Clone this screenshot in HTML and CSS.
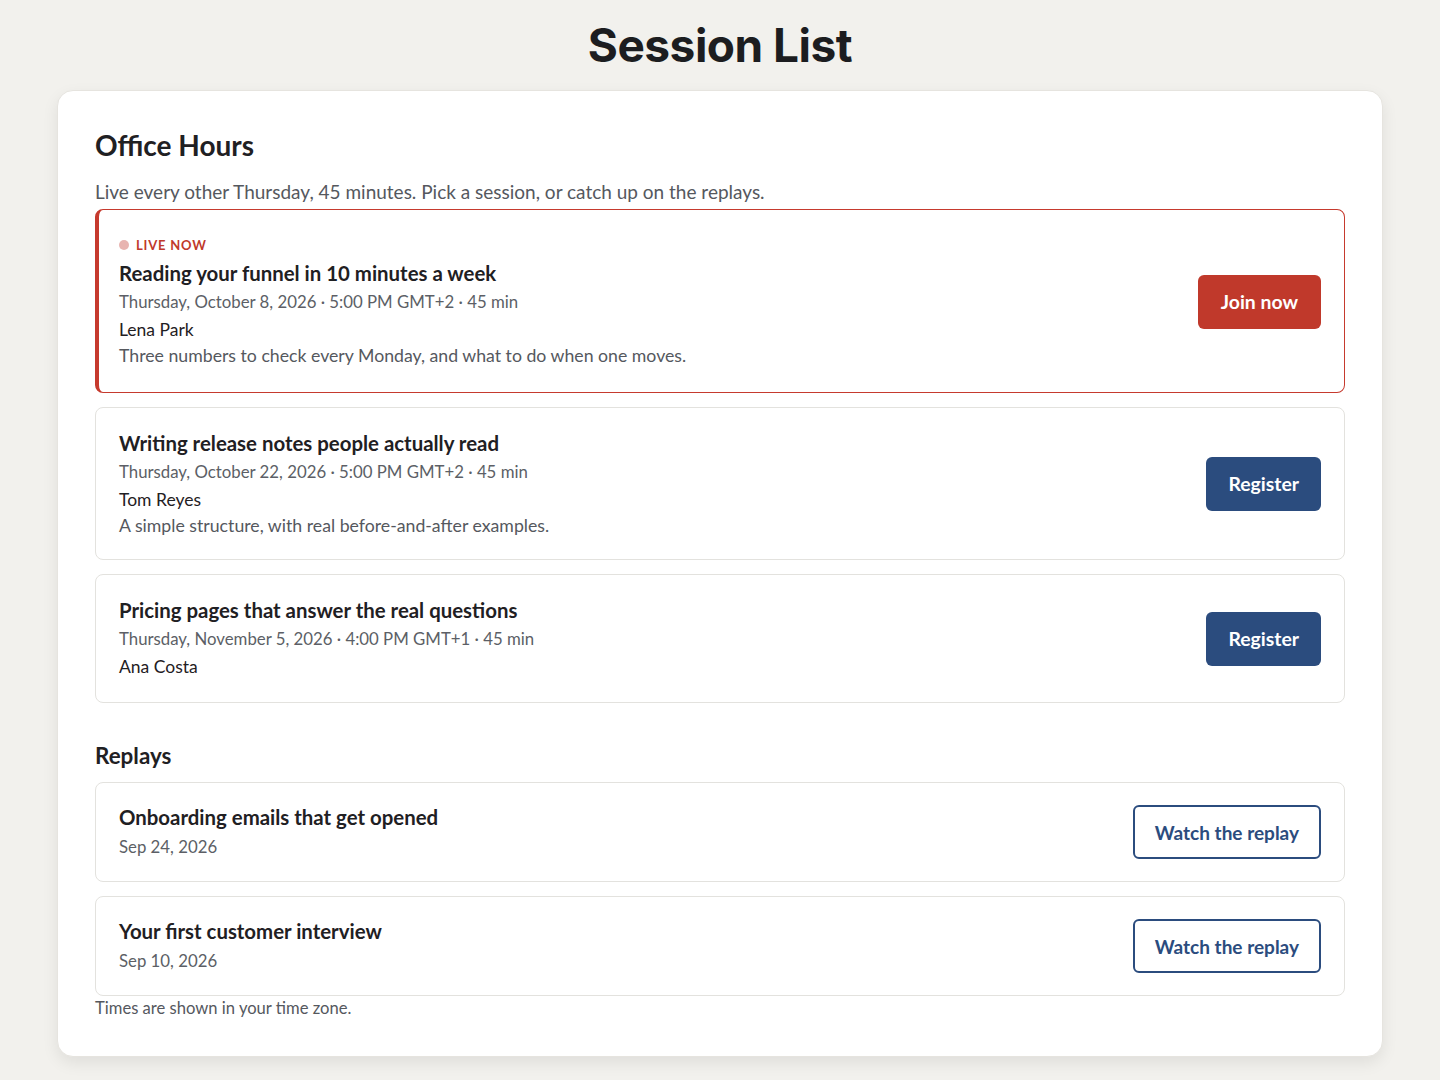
FILE: index.html
```html
<!DOCTYPE html>
<html lang="en">
<head>
<meta charset="utf-8">
<title>Session List</title>
<link rel="stylesheet" href="styles.css">
</head>
<body>
<h1 class="page-title">Session List</h1>
<main class="panel">
  <h2 class="panel-title">Office Hours</h2>
  <p class="panel-sub">Live every other Thursday, 45 minutes. Pick a session, or catch up on the replays.</p>

  <div class="list">
    <article class="session session-live">
      <div class="session-body">
        <div class="live-tag"><span class="live-dot"></span>LIVE NOW</div>
        <h3 class="session-title">Reading your funnel in 10 minutes a week</h3>
        <div class="meta">Thursday, October 8, 2026 · 5:00 PM GMT+2 · 45 min</div>
        <div class="host">Lena Park</div>
        <div class="desc">Three numbers to check every Monday, and what to do when one moves.</div>
      </div>
      <button class="btn btn-live">Join now</button>
    </article>

    <article class="session">
      <div class="session-body">
        <h3 class="session-title">Writing release notes people actually read</h3>
        <div class="meta">Thursday, October 22, 2026 · 5:00 PM GMT+2 · 45 min</div>
        <div class="host">Tom Reyes</div>
        <div class="desc">A simple structure, with real before-and-after examples.</div>
      </div>
      <button class="btn btn-primary">Register</button>
    </article>

    <article class="session">
      <div class="session-body">
        <h3 class="session-title">Pricing pages that answer the real questions</h3>
        <div class="meta">Thursday, November 5, 2026 · 4:00 PM GMT+1 · 45 min</div>
        <div class="host">Ana Costa</div>
      </div>
      <button class="btn btn-primary">Register</button>
    </article>
  </div>

  <h2 class="section-title">Replays</h2>
  <div class="list">
    <article class="session replay">
      <div class="session-body">
        <h3 class="session-title">Onboarding emails that get opened</h3>
        <div class="meta replay-date">Sep 24, 2026</div>
      </div>
      <button class="btn btn-outline">Watch the replay</button>
    </article>
    <article class="session replay">
      <div class="session-body">
        <h3 class="session-title">Your first customer interview</h3>
        <div class="meta replay-date">Sep 10, 2026</div>
      </div>
      <button class="btn btn-outline">Watch the replay</button>
    </article>
  </div>
  <p class="footnote">Times are shown in your time zone.</p>
</main>
</body>
</html>
```

FILE: styles.css
```css
* { box-sizing: border-box; }

html, body {
  margin: 0;
  padding: 0;
  background: #f2f1ed;
}

body {
  font-family: Lato, "Noto Sans", sans-serif;
  color: #1f2023;
  padding: 0 57px 25px;
}

.page-title {
  font-family: Inter, "Noto Sans", sans-serif;
  font-weight: 700;
  font-size: 46px;
  letter-spacing: -0.5px;
  text-align: center;
  margin: 0;
  padding: 15px 0 15px;
  line-height: 60px;
  color: #1c1d20;
}

.panel {
  background: #ffffff;
  border: 1px solid #e6e4df;
  border-radius: 16px;
  box-shadow: 0 6px 16px rgba(0, 0, 0, 0.08);
  padding: 35px 37px 38px;
}

.panel-title {
  font-size: 28px;
  font-weight: 700;
  margin: 0;
  line-height: 38px;
  color: #1f2023;
}

.panel-sub {
  font-size: 19px;
  color: #55585e;
  margin: 16px 0 5px;
  line-height: 24px;
}

.list {
  display: flex;
  flex-direction: column;
  gap: 14px;
}

.session {
  display: flex;
  align-items: center;
  justify-content: space-between;
  border: 1px solid #e3e2de;
  border-radius: 8px;
  padding: 21px 23px 21px 23px;
  background: #fff;
}

.session-live {
  border: 1px solid #c63a2e;
  border-left: 4px solid #c63a2e;
  padding-left: 20px;
  padding-top: 25px;
  padding-bottom: 24px;
}

.live-tag {
  display: flex;
  align-items: center;
  gap: 7px;
  font-size: 13px;
  font-weight: 700;
  letter-spacing: 0.8px;
  color: #c0392b;
  line-height: 20px;
  margin-bottom: 4px;
}

.live-dot {
  width: 10px;
  height: 10px;
  border-radius: 50%;
  background: #e8b4b0;
}

.session-title {
  font-size: 20.4px;
  font-weight: 700;
  margin: 0 0 1px;
  line-height: 28px;
  color: #1f2023;
}

.meta {
  font-size: 16.8px;
  color: #5c5f66;
  line-height: 28px;
}

.host {
  font-size: 17.5px;
  color: #1f2023;
  line-height: 28px;
}

.desc {
  font-size: 17.7px;
  color: #55585e;
  line-height: 24px;
}

.replay {
  padding-top: 20px;
  padding-bottom: 20px;
}

.replay .session-title {
  margin-bottom: 0;
}

.replay-date {
  margin-top: 2px;
}

.btn {
  font-family: Lato, "Noto Sans", sans-serif;
  font-size: 19.4px;
  font-weight: 700;
  border-radius: 6px;
  height: 54px;
  padding: 0 22px;
  cursor: pointer;
  border: none;
  flex-shrink: 0;
}

.btn-live {
  background: #c0392b;
  color: #fff;
  padding: 0 23px;
}

.btn-primary {
  background: #2b4c7e;
  color: #fff;
}

.btn-outline {
  background: #fff;
  color: #2b4c7e;
  border: 2px solid #2b4c7e;
  font-size: 19px;
  padding: 0 20px;
  height: 54px;
}

.section-title {
  font-size: 22.4px;
  font-weight: 700;
  margin: 39px 0 12px;
  line-height: 28px;
}

.footnote {
  font-size: 16.6px;
  color: #55585e;
  margin: 2px 0 0;
  line-height: 20px;
}
```
